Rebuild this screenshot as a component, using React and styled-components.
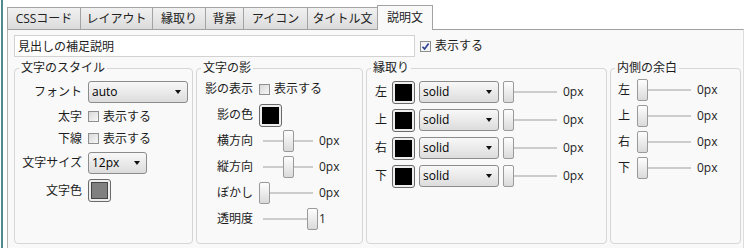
import React from "react";
import styled, { createGlobalStyle } from "styled-components";

const GlobalStyle = createGlobalStyle`
  html, body { margin: 0; padding: 0; background: #ffffff; }
  body {
    font-family: "Open Sans", "Noto Sans CJK JP", sans-serif;
    font-size: 12px;
    color: #1c1c1c;
  }
`;

const Frame = styled.div`
  margin-left: 1px;
  border-left: 2px solid #4d8b91;
  padding-left: 4px;
  height: 248px;
  box-sizing: border-box;
  display: flex;
  flex-direction: column;
  overflow: hidden;
`;

const TabBar = styled.div`
  display: flex;
  align-items: flex-end;
  height: 29px;
  flex-shrink: 0;
`;

const Tab = styled.div`
  position: relative;
  width: ${(p) => p.$w}px;
  height: ${(p) => (p.$active ? 25 : 22)}px;
  margin-bottom: ${(p) => (p.$active ? -1 : 0)}px;
  margin-left: ${(p) => (p.$first ? 0 : -1)}px;
  box-sizing: border-box;
  border: 1px solid #a3a3a3;
  border-bottom: none;
  background: ${(p) =>
    p.$active ? "#f9f9f9" : "linear-gradient(#f1f1f1, #dbdbdb)"};
  color: #222;
  display: flex;
  align-items: center;
  justify-content: center;
  line-height: 16px;
  white-space: nowrap;
  z-index: ${(p) => (p.$active ? 2 : 1)};
`;

const Panel = styled.div`
  flex: 1;
  width: 737px;
  box-sizing: border-box;
  border-top: 1px solid #a0a0a0;
  border-left: 1px solid #b4b4b4;
  border-right: 1px solid #dddddd;
  background: #f9f9f9;
  padding: 5px 1px 0 6px;
`;

const TopRow = styled.div`
  display: flex;
  align-items: center;
  height: 22px;
`;

const TextInput = styled.input`
  width: 401px;
  height: 22px;
  box-sizing: border-box;
  border: 1px solid #d2d2d2;
  background: #ffffff;
  padding: 0 3px;
  margin: 0;
  font: inherit;
  color: #1c1c1c;
  outline: none;
`;

const CheckLabel = styled.label`
  display: inline-flex;
  align-items: center;
  gap: 4px;
  height: ${(p) => p.$h || 17}px;
  margin-left: ${(p) => p.$ml || 0}px;
  white-space: nowrap;
  line-height: 16px;
`;

const Box = styled.span`
  width: 11px;
  height: 11px;
  box-sizing: border-box;
  border: 1px solid #8e8f8f;
  background: ${(p) =>
    p.$checked ? "#f4f4f4" : "linear-gradient(135deg, #d9d9d9, #f7f7f7)"};
  display: inline-flex;
  align-items: center;
  justify-content: center;
  flex-shrink: 0;
`;

const Groups = styled.div`
  display: flex;
  gap: 3px;
  margin-top: 3px;
`;

const Group = styled.fieldset`
  width: ${(p) => p.$w}px;
  height: 184px;
  box-sizing: border-box;
  margin: 0;
  padding: 0;
  min-width: 0;
  border: 1px solid #d6d6d6;
  border-radius: 4px;
`;

const Legend = styled.legend`
  margin-left: 4px;
  padding: 0 2px;
  line-height: 16px;
  font-size: 12px;
  color: #1c1c1c;
`;

const FormGrid = styled.div`
  display: grid;
  grid-template-columns: ${(p) => p.$label}px max-content;
  grid-auto-rows: ${(p) => (p.$row ? `${p.$row}px` : "auto")};
  column-gap: 6px;
  row-gap: ${(p) => p.$rowGap || 0}px;
  padding-top: ${(p) => p.$pt || 0}px;
  align-items: center;
`;

const Label = styled.span`
  justify-self: end;
  white-space: nowrap;
  line-height: 16px;
`;

const List = styled.div`
  padding-top: ${(p) => p.$pt || 0}px;
  padding-left: ${(p) => p.$pl || 0}px;
`;

const Row = styled.div`
  display: flex;
  align-items: center;
  height: ${(p) => p.$h}px;
  gap: ${(p) => p.$gap || 0}px;
`;

const SideLabel = styled.span`
  width: 12px;
  line-height: 16px;
  margin-right: ${(p) => p.$mr || 0}px;
`;

const SelectBox = styled.div`
  width: ${(p) => p.$w}px;
  height: 22px;
  box-sizing: border-box;
  border: 1px solid #8c8c8c;
  border-radius: 3px;
  background: linear-gradient(#f8f8f8, #dcdcdc);
  padding: 0 6px 0 3px;
  display: flex;
  align-items: center;
  justify-content: space-between;
  color: #000;
  line-height: 16px;
  flex-shrink: 0;
`;

const Arrow = styled.span`
  width: 0;
  height: 0;
  border-left: 3.5px solid transparent;
  border-right: 3.5px solid transparent;
  border-top: 4px solid #111;
`;

const Swatch = styled.div`
  width: 23px;
  height: 23px;
  box-sizing: border-box;
  border: 1px solid #6a6a6a;
  border-radius: 3px;
  padding: 2px;
  background: #eeeeee;
  flex-shrink: 0;
`;

const Fill = styled.div`
  width: 100%;
  height: 100%;
  box-sizing: border-box;
  background: ${(p) => p.$color};
  border: 1px solid rgba(0, 0, 0, 0.45);
`;

const SliderWrap = styled.div`
  display: flex;
  align-items: center;
`;

const Slider = styled.div`
  position: relative;
  width: 59px;
  height: 22px;
  flex-shrink: 0;
`;

const Track = styled.div`
  position: absolute;
  left: 4px;
  right: 5px;
  top: 10px;
  height: 2px;
  background: #cccccc;
`;

const Thumb = styled.div`
  position: absolute;
  top: 0;
  left: ${(p) => p.$pos}px;
  width: 11px;
  height: 22px;
  box-sizing: border-box;
  border: 1px solid #9a9a9a;
  border-radius: 2px;
  background: linear-gradient(#fefefe, #dadada);
`;

const Value = styled.span`
  margin-left: 1px;
  line-height: 16px;
  color: #1c1c1c;
`;

function Check({ checked }) {
  return (
    <Box $checked={checked}>
      {checked && (
        <svg width="9" height="9" viewBox="0 0 9 9">
          <path d="M1.5 4.8 L3.6 7 L7.6 1.6" fill="none" stroke="#2b3f8f" strokeWidth="1.6" />
        </svg>
      )}
    </Box>
  );
}

function Select({ w, value }) {
  return (
    <SelectBox $w={w}>
      <span>{value}</span>
      <Arrow />
    </SelectBox>
  );
}

function Color({ color }) {
  return (
    <Swatch>
      <Fill $color={color} />
    </Swatch>
  );
}

function Range({ ratio, value }) {
  return (
    <SliderWrap>
      <Slider>
        <Track />
        <Thumb $pos={Math.round(ratio * 48)} />
      </Slider>
      <Value>{value}</Value>
    </SliderWrap>
  );
}

const tabs = [
  ["CSSコード", 74],
  ["レイアウト", 73],
  ["縁取り", 54],
  ["背景", 39],
  ["アイコン", 65],
  ["タイトル文", 71],
  ["説明文", 56],
];

const sides = ["左", "上", "右", "下"];

export default function App() {
  return (
    <>
      <GlobalStyle />
      <Frame>
        <TabBar>
          {tabs.map(([t, w], i) => (
            <Tab key={t} $w={w} $first={i === 0} $active={i === tabs.length - 1}>
              {t}
            </Tab>
          ))}
        </TabBar>
        <Panel>
          <TopRow>
            <TextInput readOnly value="見出しの補足説明" />
            <CheckLabel $ml={5} $h={22}>
              <Check checked />
              表示する
            </CheckLabel>
          </TopRow>
          <Groups>
            <Group $w={179}>
              <Legend>文字のスタイル</Legend>
              <FormGrid $label={67} $rowGap={5} $pt={5}>
                <Label>フォント</Label>
                <Select w={100} value="auto" />
                <Label>太字</Label>
                <CheckLabel>
                  <Check />
                  表示する
                </CheckLabel>
                <Label>下線</Label>
                <CheckLabel>
                  <Check />
                  表示する
                </CheckLabel>
                <Label>文字サイズ</Label>
                <Select w={59} value="12px" />
                <Label>文字色</Label>
                <Color color="#808080" />
              </FormGrid>
            </Group>
            <Group $w={167}>
              <Legend>文字の影</Legend>
              <FormGrid $label={56} $row={26}>
                <Label>影の表示</Label>
                <CheckLabel>
                  <Check />
                  表示する
                </CheckLabel>
                <Label>影の色</Label>
                <Color color="#000000" />
                <Label>横方向</Label>
                <Range ratio={0.5} value="0px" />
                <Label>縦方向</Label>
                <Range ratio={0.5} value="0px" />
                <Label>ぼかし</Label>
                <Range ratio={0} value="0px" />
                <Label>透明度</Label>
                <Range ratio={1} value="1" />
              </FormGrid>
            </Group>
            <Group $w={241}>
              <Legend>縁取り</Legend>
              <List $pt={2} $pl={8}>
                {sides.map((s) => (
                  <Row key={s} $h={28} $gap={4}>
                    <SideLabel $mr={1}>{s}</SideLabel>
                    <Color color="#000000" />
                    <Select w={80} value="solid" />
                    <Range ratio={0} value="0px" />
                  </Row>
                ))}
              </List>
            </Group>
            <Group $w={131}>
              <Legend>内側の余白</Legend>
              <List $pt={1} $pl={7}>
                {sides.map((s) => (
                  <Row key={s} $h={26} $gap={7}>
                    <SideLabel>{s}</SideLabel>
                    <Range ratio={0} value="0px" />
                  </Row>
                ))}
              </List>
            </Group>
          </Groups>
        </Panel>
      </Frame>
    </>
  );
}
